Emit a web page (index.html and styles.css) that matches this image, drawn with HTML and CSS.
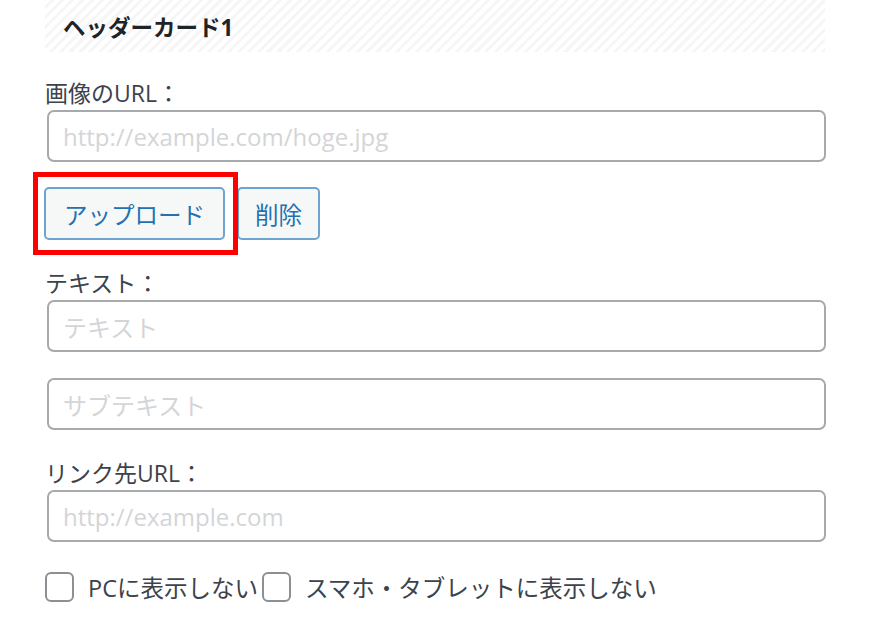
FILE: index.html
```html
<!DOCTYPE html>
<html lang="ja">
<head>
<meta charset="utf-8">
<link rel="stylesheet" href="styles.css">
</head>
<body>
<div class="panel">
  <div class="header">ヘッダーカード1</div>

  <div class="field-label first">画像のURL：</div>
  <div class="input"><span class="ph">http://example.com/hoge.jpg</span></div>

  <div class="btn-row">
    <span class="btn-wrap"><button class="btn">アップロード</button></span>
    <button class="btn btn-del">削除</button>
  </div>

  <div class="field-label second">テキスト：</div>
  <div class="input"><span class="ph">テキスト</span></div>
  <div class="input gap"><span class="ph">サブテキスト</span></div>

  <div class="field-label third">リンク先URL：</div>
  <div class="input"><span class="ph">http://example.com</span></div>

  <div class="checks">
    <span class="cb"></span><span class="cb-label">PCに表示しない</span>
    <span class="cb cb2"></span><span class="cb-label">スマホ・タブレットに表示しない</span>
  </div>
</div>
</body>
</html>
```

FILE: styles.css
```css
html, body {
  margin: 0;
  padding: 0;
  background: #ffffff;
}
body {
  font-family: "Open Sans", "Noto Sans CJK JP", sans-serif;
  color: #3c434a;
}
.panel {
  width: 780px;
  margin-left: 45px;
}
.header {
  height: 52px;
  box-sizing: border-box;
  padding-left: 18px;
  display: flex;
  align-items: center;
  font-size: 22.5px;
  font-weight: bold;
  color: #1d2327;
  background: repeating-linear-gradient(135deg, #ffffff 0, #ffffff 4px, #f6f6f6 4px, #f6f6f6 7px);
}
.field-label {
  font-size: 23px;
  line-height: 28px;
  height: 28px;
  white-space: nowrap;
}
.field-label.first { margin-top: 27px; }
.field-label.second { margin-top: 29px; }
.field-label.third { margin-top: 29px; }
.input {
  margin: 3px 0 0 2px;
  height: 52px;
  box-sizing: border-box;
  width: 779px;
  border: 2px solid #a7aaad;
  border-radius: 7px;
  display: flex;
  align-items: center;
  padding-left: 14px;
  font-size: 24px;
}
.input.gap { margin-top: 26px; }
.ph {
  color: #d4d5d7;
  white-space: nowrap;
}
.btn-row {
  margin-top: 25px;
  display: flex;
  align-items: flex-start;
  gap: 12px;
  margin-left: -1px;
}
.btn-wrap {
  position: relative;
  display: block;
}
.btn-wrap::after {
  content: "";
  position: absolute;
  left: -11px;
  top: -15px;
  right: -13px;
  bottom: -15px;
  border: 5px solid #ff0000;
  pointer-events: none;
}
.btn {
  display: block;
  height: 53px;
  box-sizing: border-box;
  padding: 0 18px;
  font-family: "Open Sans", "Noto Sans CJK JP", sans-serif;
  font-size: 23.5px;
  color: #2271b1;
  background: #f6f7f7;
  border: 2px solid #6fa3d0;
  border-radius: 5px;
  white-space: nowrap;
}
.btn-del {
  padding: 0 16px;
}
.checks {
  margin-top: 30px;
  display: flex;
  align-items: center;
  height: 30px;
  font-size: 23.5px;
  white-space: nowrap;
}
.cb {
  width: 29px;
  height: 30px;
  box-sizing: border-box;
  border: 2px solid #8c8f94;
  border-radius: 6px;
  flex: none;
}
.cb-label {
  margin-left: 14px;
}
.cb2 {
  margin-left: 4px;
}
```
